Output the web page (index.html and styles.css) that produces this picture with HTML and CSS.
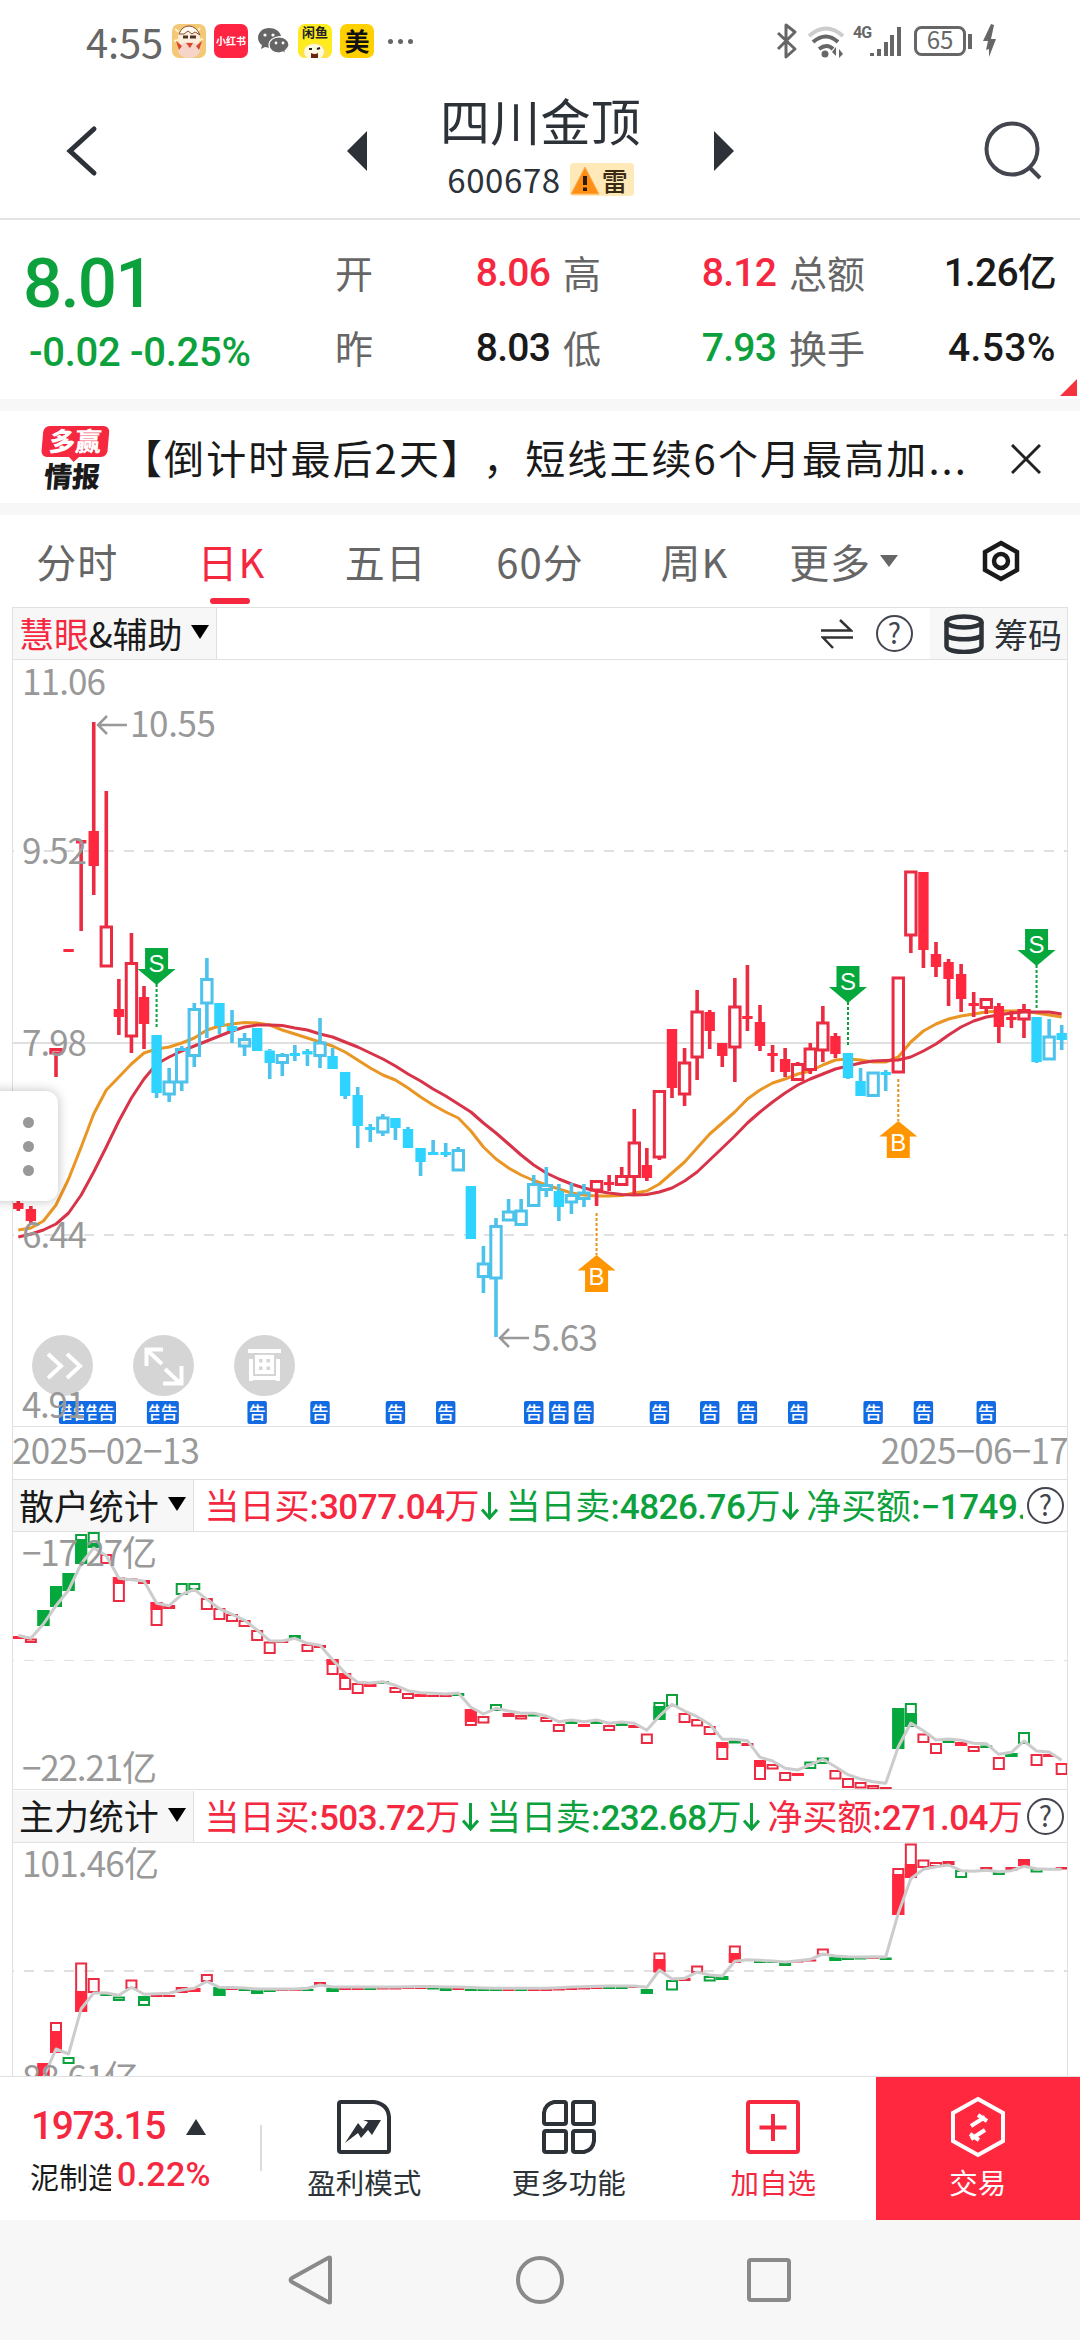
FILE: index.html
```html
<!DOCTYPE html>
<html lang="zh-CN">
<head>
  <meta charset="UTF-8">
  <meta name="viewport" content="width=device-width, initial-scale=1.0">
  <title>四川金顶 600678</title>
  <link rel="stylesheet" href="styles.css">
</head>
<body>
  <div class="status-bar">
    <span class="clock">4:55</span>
    <div class="app-icons">
      <svg class="app" viewBox="0 0 34 34"><rect width="34" height="34" fill="#f3c977"/><path d="M3 5l4 3M28 4l-3 4M2 17l4-1M31 15l-4 1" stroke="#fff3c4" stroke-width="2"/><circle cx="17" cy="14" r="11" fill="#fbeedd"/><path d="M7 10q3-8 10-8t11 9l-5-3-3 2-4-3-4 3z" fill="#fffaf0" stroke="#8d4a2f" stroke-width="1"/><path d="M11 13h5M18 13h6" stroke="#513226" stroke-width="3"/><ellipse cx="17" cy="26" rx="11" ry="8" fill="#f6d5c8"/><path d="M4 17l6 5-3 4zM30 17l-6 5 3 4zM14 19h7l-3 5z" fill="#d6452f"/></svg>
      <span class="app app-red">小红书</span>
      <svg class="app" viewBox="0 0 34 34"><path fill="#666" d="M13 4C7 4 2 8 2 14c0 3 2 6 4 7l-1 4 4-2 5 1c-1-7 4-12 11-12-1-5-6-8-12-8z"/><path fill="#666" stroke="#fff" stroke-width="1.2" d="M23 13c-5 0-10 3-10 8s5 8 10 8l4-1 3 2-1-3c2-2 4-4 4-6 0-5-5-8-10-8z"/><g fill="#fff"><circle cx="9" cy="11" r="1.6"/><circle cx="17" cy="11" r="1.6"/><circle cx="20" cy="19" r="1.4"/><circle cx="27" cy="19" r="1.4"/></g></svg>
      <span class="app app-fish">闲鱼<svg viewBox="0 0 34 20"><path d="M2 20C3 8 9 3 17 3s14 5 15 17z" fill="#ffe14a"/><ellipse cx="16" cy="12" rx="10" ry="8" fill="#fffbe0"/><path d="M11 9h3M19 9l3-1" stroke="#222" stroke-width="2"/><path d="M13 13q4 2 7 0v5q-4 4-7 0z" fill="#6b2412"/></svg></span>
      <span class="app app-mei">美</span>
    </div>
    <span class="dots"><i></i><i></i><i></i></span>
    <svg class="signals" viewBox="0 0 226 40">
      <g fill="none" stroke="#666" stroke-width="3">
        <path d="M3 12l17 16-9 8V4l9 7L3 28" stroke-linejoin="round"/>
        <path d="M34 15q17-15 34 0" stroke="#ccc" stroke-width="4"/>
        <path d="M38 21q13-11 25 0" stroke-width="4"/>
        <path d="M44 28q8-6 14 0" stroke-width="4"/>
        <rect x="140.500" y="6.500" width="49" height="27" rx="6"/>
      </g>
      <g fill="#666">
        <circle cx="50" cy="33" r="3.500"/>
        <path d="M57 31l4-5v9zM64 28v9l4-4zM95 32h4v3h-4zM102 28h4v7h-4zM109 21h4v14h-4zM115 14h4v21h-4zM122 6h4v29h-4zM193 13h4v15h-4z"/>
        <path d="M216 3l-8 17h5l-2 9 3-1v8l7-18h-5l3-14z"/>
      </g>
      <text x="78" y="17" class="net">4G</text>
      <text x="165" y="28" text-anchor="middle" class="battery">65</text>
    </svg>
  </div>

  <header class="header">
    <svg class="back" viewBox="0 0 36 52"><path d="M30 4L6 26l24 22" fill="none" stroke="#2c3238" stroke-width="5" stroke-linecap="round"/></svg>
    <svg class="prev" viewBox="0 0 20 40"><path d="M20 0v40L0 20z" fill="#2c3238"/></svg>
    <div class="stock">
      <h1>四川金顶</h1>
      <div class="code">600678
        <span class="risk"><svg viewBox="0 0 30 30"><path d="M15 2l14 27H1z" fill="#ff8f14" stroke="#ffb056"/><path d="M15 11v9M15 22.500v3.500" stroke="#2d1c08" stroke-width="4"/></svg>雷</span>
      </div>
    </div>
    <svg class="next" viewBox="0 0 20 40"><path d="M0 0v40l20-20z" fill="#2c3238"/></svg>
    <svg class="search" viewBox="0 0 60 60"><g fill="none" stroke="#43464e" stroke-width="4"><circle cx="28" cy="28" r="25.500"/><path d="M45 46l11 11"/></g></svg>
  </header>

  <section class="quote">
    <div class="price">
      <strong>8.01</strong>
      <span>-0.02 -0.25%</span>
    </div>
    <dl class="figures">
      <dt>开</dt><dd class="up">8.06</dd>
      <dt>高</dt><dd class="up">8.12</dd>
      <dt>总额</dt><dd>1.26亿</dd>
      <dt>昨</dt><dd>8.03</dd>
      <dt>低</dt><dd class="down">7.93</dd>
      <dt>换手</dt><dd>4.53%</dd>
    </dl>
    <svg class="corner" viewBox="0 0 17 17"><path d="M17 0v17H0z" fill="#f5333f"/></svg>
  </section>

  <section class="banner">
    <div class="banner-logo">
      <span class="logo-top">多赢</span>
      <span class="logo-bottom">情报</span>
    </div>
    <p>【倒计时最后2天】，短线王续6个月最高加...</p>
    <svg class="close" viewBox="0 0 30 30"><path d="M1 1l28 28M29 1L1 29" stroke="#222" stroke-width="3"/></svg>
  </section>

  <nav class="tabs">
    <span>分时</span>
    <span class="active">日K</span>
    <span>五日</span>
    <span>60分</span>
    <span>周K</span>
    <span class="with-arrow">更多<svg class="more" viewBox="0 0 18 12"><path d="M0 0h18L9 12z" fill="#666"/></svg></span>
    <svg class="gear" viewBox="0 0 40 42"><g fill="none" stroke="#1a1a1a"><path d="M20 3l16 9v18l-16 9-16-9V12z" stroke-width="4.500"/><circle cx="20" cy="21" r="7" stroke-width="4.500"/></g></svg>
  </nav>

  <main class="charts">
    <div class="chart-head">
      <div class="picker"><span class="up">慧眼</span>&amp;辅助<svg class="caret" viewBox="0 0 18 14"><path d="M0 0h18L9 14z"/></svg></div>
      <div class="tools">
        <svg class="swap" viewBox="0 0 32 30"><path d="M0 11.500h30L19 1M32 18.500H2L12 29" fill="none" stroke="#333" stroke-width="2.500"/></svg>
        <span class="help">?</span>
        <div class="chips"><svg viewBox="0 0 40 40"><g fill="none" stroke="#2c3238" stroke-width="4.500"><ellipse cx="20" cy="8" rx="17.500" ry="5.500"/><path d="M2.500 8v24c0 8 35 8 35 0V8M2.500 20c0 7 35 7 35 0"/></g></svg>筹码</div>
      </div>
    </div>
    <div class="chart-box">
      <svg id="kline" class="kline" viewBox="12 660 1056 766"></svg>
      <div class="float-tools">
        <span><svg viewBox="0 0 61 61"><path d="M16 19l13 12-13 12M35 19l13 12-13 12"/></svg></span>
        <span><svg viewBox="0 0 61 61"><path d="M13.500 31V14.500H30M14 15l15 14M32 34l15 14M48.500 31v17.500H30"/></svg></span>
        <span><svg viewBox="0 0 61 61"><path d="M14 16h33M17 24v22M17 43h27M44 24v22M23 22h15v15H23zM30.500 22v15M23 29.500h15"/></svg></span>
      </div>
      <svg id="kline-labels" class="kline overlay" viewBox="12 660 1056 766"></svg>
      <div class="side-handle"><i></i><i></i><i></i></div>
    </div>
    <div class="dates"><span>2025−02−13</span><span>2025−06−17</span></div>

    <div class="chart-head">
      <div class="picker">散户统计<svg class="caret" viewBox="0 0 18 14"><path d="M0 0h18L9 14z"/></svg></div>
      <div class="stats">
        <span class="up">当日买:<b>3077.04</b>万</span><svg class="fall" viewBox="0 0 17 28"><path d="M8.500 0v26M1 17.500l7.500 8.500 7.500-8.500"/></svg>
        <span class="down">当日卖:<b>4826.76</b>万</span><svg class="fall" viewBox="0 0 17 28"><path d="M8.500 0v26M1 17.500l7.500 8.500 7.500-8.500"/></svg>
        <span class="down">净买额:<b>−1749.</b></span>
      </div>
      <span class="help">?</span>
    </div>
    <svg id="retail" class="retail" viewBox="12 1532 1056 257"></svg>

    <div class="chart-head last">
      <div class="picker">主力统计<svg class="caret" viewBox="0 0 18 14"><path d="M0 0h18L9 14z"/></svg></div>
      <div class="stats">
        <span class="up">当日买:<b>503.72</b>万</span><svg class="fall" viewBox="0 0 17 28"><path d="M8.500 0v26M1 17.500l7.500 8.500 7.500-8.500"/></svg>
        <span class="down">当日卖:<b>232.68</b>万</span><svg class="fall" viewBox="0 0 17 28"><path d="M8.500 0v26M1 17.500l7.500 8.500 7.500-8.500"/></svg>
        <span class="up">净买额:<b>271.04</b>万</span>
      </div>
      <span class="help">?</span>
    </div>
    <svg id="major" class="major" viewBox="12 1843 1056 233"></svg>
  </main>

  <footer class="actions">
    <div class="index">
      <div class="index-row"><b>1973.15</b><svg viewBox="0 0 20 16"><path d="M10 0l10 16H0z" fill="#2c3238"/></svg></div>
      <div class="index-row"><span class="index-name">水泥制造</span><span class="pct">0.22%</span></div>
    </div>
    <div class="action">
      <svg viewBox="0 0 54 54"><path d="M4 2h33q14 2 15 15v33q0 2-2 2H4q-2 0-2-2V4q0-2 2-2z" fill="none" stroke="#2c3238" stroke-width="4"/><path d="M26 20h18L35 35l-4-5-7 8-3-5-13 10 13-20 5 6 5-7z" fill="#2c3238"/></svg>
      盈利模式
    </div>
    <div class="action">
      <svg viewBox="0 0 54 54"><g fill="none" stroke="#2c3238" stroke-width="4"><path d="M12 2h10q2 0 2 2v18q0 2-2 2H4q-2 0-2-2V13q1-9 10-11z"/><rect x="31" y="2" width="21" height="22" rx="2"/><rect x="2" y="31" width="22" height="21" rx="2"/><path d="M33 31h17q2 0 2 2v8q-1 9-10 11h-9q-2 0-2-2V33q0-2 2-2z"/></g></svg>
      更多功能
    </div>
    <div class="action add">
      <svg viewBox="0 0 54 54"><path d="M4 2h46q2 0 2 2v46q0 2-2 2H4q-2 0-2-2V4q0-2 2-2zM27 14v27M13.500 27.500h27" fill="none" stroke="#f5283f" stroke-width="4"/></svg>
      加自选
    </div>
    <div class="action trade">
      <svg viewBox="0 0 56 62"><path d="M28 3l25 14v28L28 59 3 45V17z" fill="none" stroke="#fff" stroke-width="4"/><path d="M21 30l14-9M28 19l9 6M35 34l-14 9M20 38l9 6" stroke="#fff" stroke-width="4"/></svg>
      交易
    </div>
  </footer>

  <div class="system-nav">
    <svg viewBox="0 0 48 52"><path d="M43 4v44q0 1-2 0L5 28q-3-2 0-4L41 4q2-1 2 0z"/></svg>
    <svg viewBox="0 0 48 52"><circle cx="24" cy="26" r="22"/></svg>
    <svg viewBox="0 0 48 52"><rect x="4" y="6" width="40" height="40" rx="2"/></svg>
  </div>

  <script src="chart.js"></script>
</body>
</html>
```
FILE: styles.css
```css
* {
  box-sizing: border-box;
}
body {
  margin: 0;
  width: 1080px;
  height: 2340px;
  overflow: hidden;
  background: #fff;
  color: #1a1a1a;
  font-family: "Noto Sans CJK SC", sans-serif;
  line-height: 1;
}
svg {
  display: block;
  flex: none;
}
h1, p, dl, dd {
  margin: 0;
}
i {
  display: block;
  border-radius: 50%;
}
b, strong, dd {
  font-family: Roboto, "Noto Sans CJK SC", sans-serif;
  font-weight: 500;
}
.up {
  color: #f5283f;
}
.down {
  color: #0ca13c;
}

/* system status bar */
.status-bar {
  display: flex;
  align-items: center;
  height: 84px;
  padding: 0 0 2px 86px;
  color: #666;
}
.clock {
  width: 86px;
  font-size: 40px;
  line-height: 48px;
  letter-spacing: -0.2px;
}
.app-icons {
  display: flex;
  gap: 8px;
}
.app {
  display: block;
  width: 34px;
  height: 34px;
  border-radius: 7px;
  overflow: hidden;
  text-align: center;
  font-weight: 700;
}
.app-red {
  background: #ff2442;
  color: #fff;
  font-size: 10px;
  line-height: 33px;
}
.app-fish {
  background: #ffec1f;
  color: #222;
  font-size: 13px;
  line-height: 16px;
}
.app-mei {
  background: #ffd000;
  color: #111;
  font-size: 25px;
  line-height: 32px;
}
.dots {
  display: flex;
  gap: 5px;
  margin-left: 14px;
}
.dots i {
  width: 5px;
  height: 5px;
  background: #666;
}
.signals {
  width: 226px;
  height: 40px;
  margin: 0 79px 0 auto;
}
.net {
  font: 700 16px Roboto, sans-serif;
  fill: #666;
  letter-spacing: -1px;
}
.battery {
  font-size: 24px;
  fill: #666;
}

/* stock title */
.header {
  display: flex;
  align-items: center;
  height: 136px;
  padding: 0 36px 0 64px;
  border-bottom: 2px solid #e4e4e4;
}
.back {
  width: 36px;
  height: 52px;
}
.prev {
  width: 20px;
  height: 40px;
  margin-left: 247px;
}
.next {
  width: 20px;
  height: 40px;
}
.stock {
  width: 347px;
  text-align: center;
}
.stock h1 {
  margin-top: -6px;
  font-size: 50px;
  font-weight: 400;
  line-height: 60px;
  letter-spacing: 0.3px;
  color: #2c3238;
}
.code {
  display: flex;
  align-items: center;
  justify-content: center;
  gap: 9px;
  height: 58px;
  padding-top: 3px;
  font-size: 33px;
  letter-spacing: 0.6px;
  color: #2c3238;
}
.risk {
  display: flex;
  align-items: center;
  width: 64px;
  height: 33px;
  border-radius: 4px;
  background: #ffe9b8;
  font-size: 26px;
  font-weight: 500;
  letter-spacing: 0;
  color: #3a2a12;
}
.risk svg {
  width: 30px;
  height: 30px;
  margin-right: 2px;
}
.search {
  width: 60px;
  height: 60px;
  margin-left: auto;
}

/* quote figures */
.quote {
  position: relative;
  display: flex;
  height: 179px;
}
.price {
  width: 335px;
  padding-left: 23px;
  color: #0ca13c;
}
.price strong {
  display: block;
  margin-top: 31px;
  font-size: 69px;
  line-height: 66px;
  letter-spacing: -1.8px;
}
.price span {
  display: block;
  margin: 13px 0 0 6px;
  font: 500 40px/46px Roboto, sans-serif;
  letter-spacing: -0.3px;
}
.figures {
  display: grid;
  grid-template-columns: 38px 190px 38px 188px 78px 189px;
  grid-auto-rows: 75px;
  padding-top: 16px;
  align-items: center;
  font-size: 38px;
  white-space: nowrap;
}
.figures dt {
  padding-bottom: 4px;
  color: #666;
}
.figures dd {
  padding-right: 13px;
  text-align: right;
  font-size: 39px;
  letter-spacing: -0.8px;
}
.figures dd:nth-of-type(3n) {
  padding-right: 0;
}
.figures dd:last-child {
  letter-spacing: 0.4px;
}
.corner {
  position: absolute;
  right: 3px;
  bottom: 3px;
  width: 17px;
  height: 17px;
}

/* promotion */
.banner {
  display: flex;
  align-items: center;
  height: 116px;
  padding-left: 41px;
  border: solid #f7f7f7;
  border-width: 12px 0;
}
.banner-logo {
  width: 66px;
  text-align: center;
  font-weight: 900;
  transform: skewX(-5deg);
}
.logo-top {
  position: relative;
  display: block;
  height: 31px;
  border-radius: 6px;
  background: #f5283f;
  color: #fff;
  font-size: 26px;
  line-height: 28px;
}
.logo-top::after {
  content: "";
  position: absolute;
  left: 27px;
  top: 30px;
  border: 6px solid transparent;
  border-top-color: #f5283f;
}
.logo-bottom {
  display: block;
  margin-top: 5px;
  font-size: 28px;
  line-height: 26px;
}
.banner p {
  width: 872px;
  margin-left: 15px;
  font-size: 40px;
  line-height: 50px;
  letter-spacing: 2.1px;
  white-space: nowrap;
  text-spacing-trim: space-all;
}
.close {
  width: 30px;
  height: 30px;
  margin: 3px 0 0 17px;
}

/* period tabs */
.tabs {
  display: grid;
  grid-template-columns: repeat(7, 154.3px);
  align-items: center;
  justify-items: center;
  height: 92px;
  font-size: 40px;
  letter-spacing: 1px;
  color: #666;
}
.tabs span {
  position: relative;
  display: flex;
  align-items: center;
}
.tabs .active {
  color: #f5283f;
}
.tabs .active::after {
  content: "";
  position: absolute;
  left: 12px;
  bottom: -23px;
  width: 40px;
  height: 6px;
  border-radius: 3px;
  background: #f5283f;
}
.tabs .with-arrow {
  margin-right: 10px;
}
.more {
  width: 18px;
  height: 12px;
  margin-left: 9px;
}
.gear {
  width: 40px;
  height: 42px;
  margin-right: 4px;
}

/* charts */
.charts {
  width: 1056px;
  height: 1469px;
  margin-left: 12px;
  overflow: hidden;
  border: solid #e0e0e0;
  border-width: 0 1px;
}
.chart-head {
  display: flex;
  align-items: center;
  height: 53px;
  border: solid #e0e0e0;
  border-width: 1px 0;
  font-size: 35px;
}
.picker {
  display: flex;
  align-items: center;
  height: 51px;
  padding: 0 7px 3px 6px;
  border-right: 1px solid #e0e0e0;
  background: #f7f7f7;
  letter-spacing: -0.1px;
  white-space: nowrap;
}
.caret {
  width: 18px;
  height: 14px;
  margin-left: 9px;
}
.tools {
  display: flex;
  align-items: center;
  margin-left: auto;
}
.swap {
  width: 32px;
  height: 30px;
  margin-right: 23px;
}
.help {
  flex: none;
  width: 37px;
  height: 37px;
  border: 2px solid #43464e;
  border-radius: 50%;
  font-size: 28px;
  line-height: 31px;
  text-align: center;
  color: #43464e;
}
.chart-head > .help {
  margin: 0 3px 0 4px;
}
.chips {
  display: flex;
  align-items: center;
  height: 51px;
  margin-left: 17px;
  padding: 0 5px 0 14px;
  background: #f7f7f7;
  color: #2c3238;
  font-size: 34px;
}
.chips svg {
  width: 40px;
  height: 40px;
  margin-right: 10px;
}
.stats {
  display: flex;
  flex: 1;
  align-items: center;
  padding: 1px 0 0 11px;
  overflow: hidden;
  font-size: 35px;
  line-height: 48px;
  letter-spacing: -0.1px;
  white-space: nowrap;
}
.stats b {
  font-size: 35px;
  letter-spacing: -0.5px;
}
.fall {
  width: 17px;
  height: 28px;
  margin: 0 7px 0 2px;
  fill: none;
  stroke: #0ca13c;
  stroke-width: 3;
}
.chart-box {
  position: relative;
  height: 766px;
  margin: 0 -1px;
}
.kline {
  width: 1056px;
  height: 766px;
}
.overlay {
  position: absolute;
  left: 0;
  top: 0;
}
.float-tools {
  position: absolute;
  left: 20px;
  top: 675px;
  display: flex;
  gap: 40px;
}
.float-tools span {
  width: 61px;
  height: 61px;
  border-radius: 50%;
  background: #d5d5d5;
}
.float-tools path {
  fill: none;
  stroke: #fff;
  stroke-width: 4;
}
.side-handle {
  position: fixed;
  left: -14px;
  top: 1091px;
  display: flex;
  flex-direction: column;
  align-items: center;
  justify-content: center;
  gap: 13px;
  width: 72px;
  height: 110px;
  padding-left: 13px;
  border-radius: 12px;
  background: #fff;
  box-shadow: 0 0 12px rgba(0, 0, 0, 0.25);
}
.side-handle i {
  width: 11px;
  height: 11px;
  background: #999;
}
.dates {
  display: flex;
  justify-content: space-between;
  height: 53px;
  margin: 0 -1px;
  padding-top: 4px;
  border-top: 1px solid #e0e0e0;
  background: #fff;
  color: #999;
  font-size: 35px;
  letter-spacing: -0.7px;
}
.retail {
  width: 1056px;
  height: 257px;
  margin: 0 -1px;
}
.last {
  height: 54px;
}
.major {
  width: 1056px;
  height: 233px;
  margin: 0 -1px;
}
.axis {
  font-size: 35px;
  fill: #999;
}
.mark {
  font: 24px "Liberation Sans", sans-serif;
  fill: #fff;
  text-anchor: middle;
}
.notice {
  font-size: 17px;
  font-weight: 500;
  fill: #fff;
  text-anchor: middle;
}

/* bottom bars */
.actions {
  display: flex;
  height: 144px;
  border-top: 1px solid #e0e0e0;
  background: #fff;
}
.index {
  width: 262px;
  padding: 25px 0 0 29px;
  background: linear-gradient(#ddd, #ddd) 260px 48px / 2px 46px no-repeat;
}
.index-row {
  display: flex;
  align-items: center;
  height: 49px;
}
.index-row b {
  width: 157px;
  padding-left: 2px;
  font-size: 39px;
  letter-spacing: -1.4px;
  color: #f5283f;
}
.index-row svg {
  width: 20px;
  height: 16px;
}
.index-name {
  display: flex;
  width: 82px;
  overflow: hidden;
  font-size: 29px;
  line-height: 40px;
  text-indent: -28px;
  white-space: nowrap;
}
.pct {
  margin: -4px 0 0 6px;
  font: 500 34px Roboto, sans-serif;
  letter-spacing: 0.3px;
  color: #f5283f;
}
.action {
  flex: 1;
  display: flex;
  flex-direction: column;
  align-items: center;
  padding-top: 23px;
  font-size: 28.5px;
  line-height: 34px;
  color: #2c3238;
}
.action svg {
  width: 54px;
  height: 54px;
  margin-bottom: 11px;
}
.add {
  color: #f5283f;
}
.trade {
  padding-top: 19px;
  background: #ff283e;
  color: #fff;
}
.trade svg {
  width: 56px;
  height: 62px;
  margin-bottom: 7px;
}
.system-nav {
  display: flex;
  justify-content: center;
  gap: 181px;
  height: 120px;
  padding-top: 34px;
  background: #f7f7f7;
}
.system-nav svg {
  width: 48px;
  height: 52px;
  fill: none;
  stroke: #8a8a8a;
  stroke-width: 4;
}
```
FILE: chart.js
```js
const RED = '#ea2b42', BLUE = '#2fd3ff', BLUE_LINE = '#4dc3ec', GREEN = '#0ca13c';
const x = i => 18.3 + i * 12.571;

// [index, colour + style, high, top, bottom, low], upper case = solid body
const candles = [
  [0,'R',1201,1203,1209,1211],[1,'R',1206,1209,1221,1223],[3,'r',1048,1049.5,1053,1077],[4,'R',949,949,952,952],
  [5,'R',840,840,843.5,931],[6,'R',722,831,866,895],[7,'r',791,927,966,966],[8,'R',979,1009,1017,1035],
  [9,'r',933,963.5,1036,1053],[10,'R',986,997,1024,1049],[11,'B',1035,1035,1093,1098],[12,'b',1068,1082,1094,1102],
  [13,'b',1046,1049.5,1082,1091],[14,'b',1003,1009.5,1055.5,1067],[15,'b',958,979.5,1003,1038],[16,'B',1003,1003,1026,1034],
  [17,'B',1010,1026,1031,1043],[18,'b',1033,1039.5,1046,1056],[19,'B',1028,1028,1051,1051],[20,'B',1049,1050.5,1063,1079],
  [21,'b',1053,1055.5,1062.5,1076],[22,'B',1045,1053,1056,1061],[23,'B',1049,1051,1054.5,1066],[24,'b',1018,1043,1055.5,1068],
  [25,'B',1048,1056,1069,1069],[26,'B',1072,1072,1096,1099],[27,'B',1087,1095,1126,1148],[28,'B',1124,1127,1130,1142],
  [29,'b',1114,1118,1132,1136],[30,'B',1118,1118,1128,1140],[31,'B',1127,1129,1148,1148],[32,'B',1148,1148,1162,1176],
  [33,'B',1140,1152,1155,1155],[34,'B',1143,1152,1155,1157],[35,'b',1147,1150.5,1170,1170],[36,'B',1186,1186,1239,1239],
  [37,'b',1246,1264,1276.5,1293],[38,'b',1218,1226.5,1278,1337],[39,'b',1199,1212,1220,1220],[40,'b',1199,1211,1224.5,1225],
  [41,'b',1175,1184.5,1205.5,1206],[42,'b',1167,1185.5,1189.5,1197],[43,'B',1184,1191,1207,1221],[44,'b',1183,1195.5,1202,1214],
  [45,'b',1184,1193,1198.5,1207],[46,'r',1181,1181.5,1190,1206],[47,'R',1175,1182,1185,1191],[48,'r',1167,1176.5,1184.5,1185],
  [49,'r',1109,1143,1176.5,1194],[50,'R',1148,1165,1178,1181],[51,'r',1090,1091.5,1157,1160],[52,'R',1029,1029,1088,1098],
  [53,'r',1048,1063,1094,1106],[54,'r',990,1012,1057,1080],[55,'R',1010,1012,1031,1049],[56,'R',1043,1043,1056,1067],
  [57,'r',978,1007,1047,1082],[58,'R',965,1016,1019,1031],[59,'R',1005,1022,1046,1051],[60,'R',1045,1053,1056,1072],
  [61,'R',1048,1059,1072,1077],[62,'r',1062,1064.5,1079.5,1080],[63,'r',1043,1049,1069.5,1074],[64,'r',1006,1023,1050,1062],
  [65,'R',1033,1036,1054,1058],[66,'B',1053,1053,1078,1079],[67,'B',1068,1081,1096,1096],[68,'b',1072,1073,1095.5,1096],
  [69,'B',1070,1072,1075,1091],[70,'r',978,978,1072,1072],[71,'r',872,872,935,953],[72,'R',872,872,950,968],
  [73,'R',942,954,967,977],[74,'R',959,962,979,1006],[75,'R',964,974,999,1012],[76,'R',992,1003,1006,1017],
  [77,'r',999,999.5,1007.5,1014],[78,'R',1003,1006,1027,1043],[79,'R',1011,1017,1020,1028],[80,'r',1004,1010.5,1019,1038],
  [81,'B',1017,1017,1062,1063],[82,'b',1019,1037,1059,1059],[83,'B',1025,1033,1040,1050]
];

const fastLine = [1230,1228,1221,1205,1179,1147,1114,1090,1077,1064,1053,1049,1047,1043,1038,1030,1026,1024,1022.5,1023,1025,1030,1034,1038,1042,1046,1052,1060,1068,1075,1080,1088,1097,1105,1112,1118,1131,1147,1159,1168,1175,1180.5,1185,1189,1193,1195,1196,1196,1195.5,1193,1191,1184,1173,1162,1148,1134,1123,1112,1099,1090,1083,1079,1074,1071,1065,1060,1059,1060,1062,1062,1057,1042,1031,1024,1019,1016,1014,1012,1011,1011,1011,1013,1015,1017];
const slowLine = [1237,1234,1230,1224,1213,1195,1172,1147,1121,1098,1079,1064,1057,1051,1046,1041,1036,1031,1027,1025,1025,1025.5,1028,1030,1034,1037,1042,1047,1053,1059,1066,1074,1081,1089,1096,1104,1112,1123,1133,1144,1155,1165,1173,1179,1184,1188,1191,1193,1194.5,1195,1194.5,1192,1188,1181,1172,1160,1148,1136,1123,1112,1102,1093,1085,1079,1074,1069,1066,1063,1061,1060.5,1060,1057,1051,1044,1035,1027,1021,1017,1015,1013,1012,1012,1012,1014];

// [colour, top, bottom, solid from, solid to]
const retailBars = [
  ['r',1636,1639,1636,1639],['r',1638.5,1643],['g',1610,1626,1610,1626],['g',1586,1607,1586,1607],['g',1573,1591,1573,1591],['g',1534,1564,1539,1564],
  ['g',1532,1548,1543,1548],['r',1554,1564],['r',1577,1602,1577,1584],['r',1578.5,1580.5],['r',1580,1584],['r',1602,1626,1602,1610],
  ['r',1605,1609],['g',1583,1595],['g',1583,1590],['r',1598,1610],['r',1608,1620],['r',1614,1622],['r',1620,1627],['r',1630,1641],
  ['r',1641.5,1654],['r',1641,1643],['g',1635,1639],['r',1644,1652],['r',1645,1648],['r',1659,1675,1659,1665],['r',1673.5,1690,1673,1679],
  ['r',1683,1694],['r',1683,1687,1683,1687],['g',1681,1684],['r',1687,1693],['r',1693,1699],['r',1694,1697,1694,1697],['r',1695,1697],
  ['r',1695,1697],['g',1693,1696],['r',1709,1726,1709,1722],['r',1716,1723.5],['g',1704,1711],['r',1713,1717],['r',1715,1719.5],
  ['g',1713.5,1716.5],['r',1717,1722],['r',1724,1732],['g',1721,1724],['r',1724,1727,1724,1727],['g',1721,1724],['r',1725,1731],
  ['g',1723,1726],['r',1725,1728],['r',1733.5,1744],['g',1702,1720,1706,1720],['g',1694,1707],['r',1713,1723],['r',1719,1726.5],
  ['r',1726,1735],['r',1742,1760,1742,1748],['g',1740.5,1743.5],['r',1743,1746],['r',1760.5,1780,1760,1767],['r',1764,1769.5],
  ['r',1772,1781],['r',1773,1776,1773,1776],['g',1761.5,1769],['g',1757.5,1764],['r',1770,1779.5],['r',1778,1788],['r',1782,1788.5],
  ['r',1785,1789.5],['r',1787,1789],['g',1708,1749,1708,1749],['g',1703,1727,1713,1727],['r',1733.5,1743],['r',1743,1754],['g',1740.5,1743],
  ['r',1742.5,1746,1742,1746],['r',1746,1752],['g',1745.5,1748],['r',1757,1770],['g',1753,1757,1753,1757],['g',1732,1744],
  ['r',1754,1766],['r',1754,1757],['r',1763,1775,1763,1765]
];
const retailLine = [1635.5,1638.3,1624,1605.7,1590,1563.7,1548,1555.7,1578.3,1579.7,1581,1603.3,1605.7,1594.7,1589.3,1599.3,1608.7,1614.3,1620.3,1630,1640.7,1641,1638.3,1643.3,1645.3,1659.7,1673,1682.3,1683,1681.7,1685.3,1690.7,1692.7,1693.3,1694,1693,1707.3,1714,1708.3,1711,1713.3,1713.3,1716,1721.7,1720,1721.7,1720,1723.3,1722,1723.3,1730.3,1716,1704.3,1711,1716.7,1724.3,1739.3,1739.3,1740.7,1757.3,1761,1768.3,1770,1764.7,1759.3,1766.7,1774.7,1779,1781.7,1783.3,1746.7,1723,1730.7,1740,1739,1740.3,1743.3,1743.7,1754.3,1752.3,1741,1751,1752,1760.3];

const majorBars = [
  null,null,['r',2063,2085,2063,2085],['r',2022,2053,2031,2053],['g',2057,2064],['r',1962.5,2012,1991,2012],['r',1978,1993],['g',1994,1996],
  ['g',1996.5,2001],['r',1979.5,1989],['g',1996,2006,1996,2001],['r',1995,1997],['r',1995,1997],['r',1987,1993],['r',1988,1992,1988,1992],
  ['r',1974,1982],['g',1987,1996,1987,1996],['r',1988,1990],['g',1989,1991],['g',1990,1994,1990,1994],['g',1990,1992],['r',1990,1991],
  ['r',1989.5,1991],['g',1989,1991],['r',1982,1986],['g',1988,1992,1988,1992],['r',1988,1990],['r',1988,1990],['g',1988,1990],['r',1988,1989.5],
  ['r',1988,1989.5],['r',1988,1989],['r',1988,1989],['g',1988,1989.5],['g',1988,1991],['r',1988,1990],['g',1989,1991],['g',1989,1991],['g',1989,1991],
  ['r',1989,1991],['g',1989,1991],['r',1989,1991],['r',1989,1991],['r',1989,1990.5],['r',1988,1990],['r',1988,1989.5],['r',1987.5,1989],
  ['g',1987,1989],['g',1987,1989],['r',1986,1988],['g',1989,1994,1989,1994],['r',1952.5,1972.5,1959,1972],['g',1980,1990.5],['r',1978,1981],
  ['r',1965.5,1973],['g',1976,1981.5],['g',1976.5,1980,1976,1980],['r',1945.5,1963,1953,1963],['r',1959,1961],['g',1960.5,1963],['g',1961,1963],
  ['g',1962,1966],['r',1960.5,1962.5],['r',1959.5,1961.5],['r',1948.5,1955.5],['g',1957,1961,1957,1961],['g',1957.5,1960],['g',1957.5,1959.5],
  ['r',1957,1959],['g',1957.5,1960],['r',1868,1915,1874,1915],['r',1843.5,1878,1864,1878],['r',1859.5,1868],['r',1862,1867],['r',1861,1865],
  ['g',1870,1878],['g',1870,1872],['r',1867,1870.5],['g',1872,1875],['r',1867,1870.5],['r',1859,1865.5,1861,1866],['g',1868,1872.5],['g',1868,1870],['r',1867,1869.5]
];
const majorLine = [2110,2100,2078,2049,2054,2008.7,1993,1993,1995.3,1987.3,1994.3,1993.7,1993.3,1990,1988.3,1981.3,1987.3,1987.5,1988,1989,1989,1989,1989,1988.3,1985,1987,1987,1987,1987,1987,1987,1986.8,1986.5,1986.5,1987,1987,1987.5,1988,1988.3,1988.3,1988.3,1988.3,1988.3,1987.7,1987,1986.7,1986.3,1986,1986,1986,1987.3,1970,1979,1978.3,1972,1975,1976,1961.3,1959.7,1960.3,1961,1962,1960.7,1959.3,1954,1956,1956.7,1957,1956.7,1957,1913.3,1878.7,1869.3,1866.7,1865,1870.7,1871.3,1870.3,1871.7,1870.7,1866.3,1868.7,1869.3,1869.3];

function polyline(ys, color, width) {
  const points = ys.map((y, i) => `${x(i).toFixed(1)},${y}`).join(' ');
  return `<polyline points="${points}" fill="none" stroke="${color}" stroke-width="${width}" stroke-linejoin="round"/>`;
}

function grid(y, width) {
  return `<path d="M4 ${y}H1067" stroke="#e0e0e0" stroke-width="${width}" stroke-dasharray="10 10"/>`;
}

function label(text, left, y, width) {
  return `<text class="axis" x="${left}" y="${y}" textLength="${width}">${text}</text>`;
}

function candle([i, kind, high, top, bottom, low]) {
  const cx = x(i);
  const solid = kind === kind.toUpperCase();
  const red = kind.toLowerCase() === 'r';
  const line = red ? RED : BLUE_LINE;
  const wick = (a, b) => b > a ? `<rect x="${cx - 1.8}" y="${a}" width="3.6" height="${b - a}" fill="${line}"/>` : '';
  const body = solid
    ? `<rect x="${cx - 5.2}" y="${top}" width="10.4" height="${bottom - top}" fill="${red ? '#ff283e' : BLUE}"/>`
    : `<rect x="${cx - 5.2}" y="${top}" width="10.4" height="${bottom - top}" fill="none" stroke="${line}" stroke-width="3"/>`;
  return wick(high, top) + wick(bottom, low) + body;
}

function bars(list) {
  return list.map((bar, i) => {
    if (!bar) return '';
    const [kind, top, bottom, from, to] = bar;
    const color = kind === 'r' ? RED : GREEN;
    const left = x(i) - 6;
    let out = bottom - top < 3
      ? `<rect x="${left}" y="${top}" width="12" height="${bottom - top}" fill="${color}"/>`
      : `<rect x="${left + 1}" y="${top + 1}" width="10" height="${bottom - top - 2}" fill="none" stroke="${color}" stroke-width="2"/>`;
    if (from) out += `<rect x="${left}" y="${from}" width="12" height="${to - from}" fill="${kind === 'r' ? '#ff283e' : '#05a83c'}"/>`;
    return out;
  }).join('');
}

function sell(i, top) {
  const cx = x(i), y = top;
  return `<path d="M${cx} ${y + 36}V${y + 79}" stroke="${GREEN}" stroke-width="2" stroke-dasharray="3 2"/>
    <path d="M${cx - 11.5} ${y}h23v21h7.500L${cx} ${y + 37}L${cx - 19} ${y + 21}h7.500z" fill="#05a83c"/>
    <text class="mark" x="${cx}" y="${y + 24}">S</text>`;
}

function buy(i, tip) {
  const cx = x(i), y = tip;
  return `<path d="M${cx} ${y - 42}V${y}" stroke="#e8921d" stroke-width="2" stroke-dasharray="3 2"/>
    <path d="M${cx} ${y}l19 15.500h-7.500v21.500h-23v-21.500h-7.500z" fill="#ff9500"/>
    <text class="mark" x="${cx}" y="${y + 30}">B</text>`;
}

function notice(i) {
  return `<rect x="${x(i) - 9.7}" y="1401" width="19.4" height="23" rx="2" fill="#126be3"/>
    <text class="notice" x="${x(i)}" y="1419">告</text>`;
}

document.getElementById('kline').innerHTML =
  grid(851, 2) + '<path d="M12 1043H1067" stroke="#e0e0e0" stroke-width="2"/>' + grid(1235, 2) +
  polyline(fastLine, '#ea9624', 3) + polyline(slowLine, '#d83349', 3) +
  candles.map(candle).join('') +
  sell(11, 948) + sell(66, 966) + sell(81, 929) + buy(46, 1255) + buy(70, 1121) +
  [4, 5, 6, 7, 11, 12, 19, 24, 30, 34, 41, 43, 45, 51, 55, 58, 62, 68, 72, 77].map(notice).join('');

document.getElementById('kline-labels').innerHTML =
  label('11.06', 22, 695, 84) + label('9.52', 22, 864, 65) + label('7.98', 22, 1056, 65) +
  label('6.44', 22, 1248, 65) + label('4.91', 22, 1418, 64) +
  label('10.55', 130, 737, 86) + label('5.63', 532, 1351, 66) +
  '<path d="M127 725H98m9-9l-9 9 9 9M529 1338H500m9-9l-9 9 9 9" fill="none" stroke="#999" stroke-width="2.500"/>';

document.getElementById('retail').innerHTML =
  grid(1660.500, 1) + bars(retailBars) + polyline(retailLine, '#ccc', 3) +
  label('−17.27亿', 22, 1566, 135) + label('−22.21亿', 22, 1781, 135);

document.getElementById('major').innerHTML =
  grid(1971, 2) + bars(majorBars) + polyline(majorLine, '#ccc', 3) +
  label('101.46亿', 22, 1877, 137) + label('88.61亿', 22, 2091, 117);
```
